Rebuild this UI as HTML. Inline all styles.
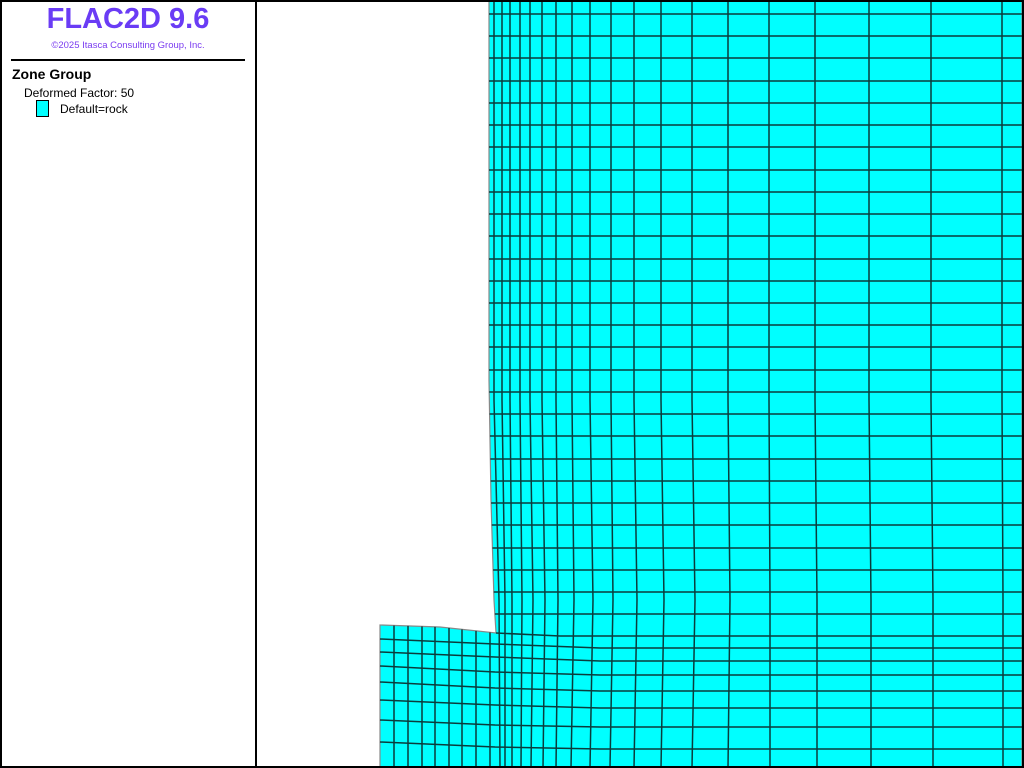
<!DOCTYPE html>
<html><head><meta charset="utf-8"><style>
html,body{margin:0;padding:0;background:#fff;}
body{width:1024px;height:768px;overflow:hidden;position:relative;font-family:"Liberation Sans","DejaVu Sans",sans-serif;}
.t{position:absolute;white-space:nowrap;}
</style></head><body>
<svg width="1024" height="768" style="position:absolute;left:0;top:0" xmlns="http://www.w3.org/2000/svg">
<g id="mesh"></g>
</svg>
<script>
(function(){
var ns="http://www.w3.org/2000/svg",g=document.getElementById('mesh');
function el(n,a){var e=document.createElementNS(ns,n);for(var k in a)e.setAttribute(k,a[k]);g.appendChild(e);return e;}
function ex(y){if(y<=380)return 489;if(y<=500)return 489+2*(y-380)/120;if(y<=600)return 491+3*(y-500)/100;return 494+2*(y-600)/33;}
function ty(x){if(x<=440)return 625+2*(x-380)/60;return 627+6*(x-440)/56;}
el('path',{d:'M489,0 L1022,0 L1022,768 L380,768 L380,625 L440,627 L496,633 L494,600 L491,500 L489,380 Z',fill:'#00ffff',stroke:'#888','stroke-width':1.2});
var L='#0b3c3c',W=1.5;
for(var i=0;i<28;i++){var y=Math.round(14+22.23*i);el('line',{x1:ex(y),y1:y,x2:1022,y2:y,stroke:L,'stroke-width':W});}
el('polyline',{points:'496,633 560,636 1022,636',fill:'none',stroke:L,'stroke-width':W});
var yl=[639,652,666,682,700,720,742],ym=[644,657,672,688,705,725,747],yr=[648,661,675,691,708,727,749];
for(var j=0;j<7;j++)el('polyline',{points:'380,'+yl[j]+' 495,'+ym[j]+' 600,'+yr[j]+' 1022,'+yr[j],fill:'none',stroke:L,'stroke-width':W});
var xt=[494,502,510,520,530,542,556,572,590,611,634,661,692,728,769,815,869,931,1002];
var xm=[499,505,512,522,533,545,558,574,593,613,637,664,695,730,770,817,871,933,1003];
var xb=[500,505,512,521,531,543,556,571,590,610,634,661,692,728,770,817,871,933,1003];
xt.forEach(function(x,i){el('polyline',{points:x+',0 '+x+',400 '+xm[i]+',600 '+xb[i]+',768',fill:'none',stroke:L,'stroke-width':W});});
[394,408,422,435,449,462,476,490].forEach(function(x){el('line',{x1:x,y1:ty(x),x2:x,y2:768,stroke:L,'stroke-width':W});});
})();
</script>
<div style="position:absolute;left:0;top:0;width:1020px;height:764px;border:2px solid #000;"></div>
<div style="position:absolute;left:255px;top:0;width:2px;height:768px;background:#000;"></div>
<div style="position:absolute;left:11px;top:59px;width:234px;height:2px;background:#000;"></div>
<div class="t" style="left:0;width:256px;text-align:center;top:3px;font-size:29px;font-weight:bold;color:#6a3cf5;">FLAC2D 9.6</div>
<div class="t" style="left:0;width:256px;text-align:center;top:40px;font-size:9.5px;color:#7a3cf0;">©2025 Itasca Consulting Group, Inc.</div>
<div class="t" style="left:12px;top:66px;font-size:14px;font-weight:bold;">Zone Group</div>
<div class="t" style="left:24px;top:86px;font-size:12px;">Deformed Factor: 50</div>
<div style="position:absolute;left:36px;top:100px;width:11px;height:15px;background:#00ffff;border:1px solid #000;"></div>
<div class="t" style="left:60px;top:102px;font-size:12px;">Default=rock</div>
</body></html>
